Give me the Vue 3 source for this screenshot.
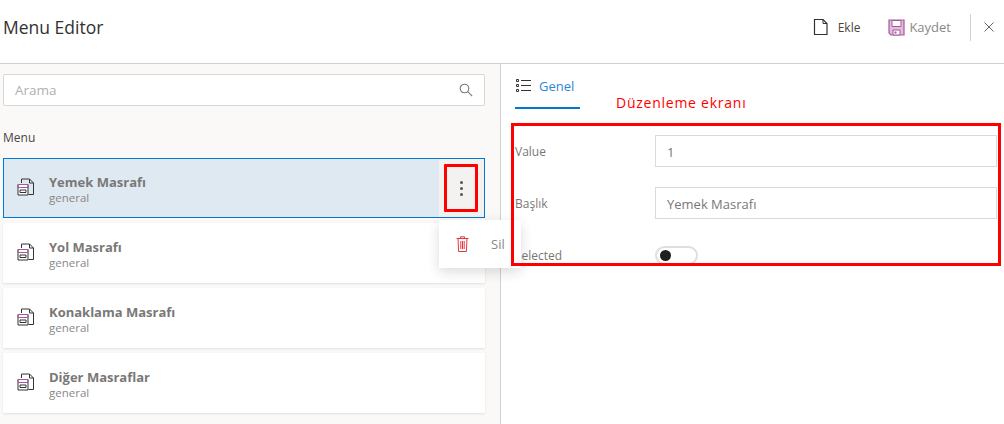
<script setup>
const items = [
  { title: 'Yemek Masrafı', active: true },
  { title: 'Yol Masrafı' },
  { title: 'Konaklama Masrafı' },
  { title: 'Diğer Masraflar' },
]
</script>

<template>
  <div class="page">
    <header class="top">
      <h1>Menu Editor</h1>
      <div class="actions">
        <button class="act ekle">
          <svg width="16" height="18" viewBox="0 0 16 18"><path d="M1.500 1.500h8.500l4 4v11h-12.500z" fill="#fff" stroke="#333" stroke-width="1.200"/><path d="M10 1.500v4h4" fill="none" stroke="#333"/></svg>
          <span>Ekle</span>
        </button>
        <button class="act kaydet">
          <svg width="17" height="17" viewBox="0 0 17 17"><path d="M1 1h15v15H3l-2-2z" fill="#e3bcdc" stroke="#a6589b" stroke-width="1.200"/><path d="M4 1.500h9v6H4z" fill="#fff" stroke="#a6589b"/><path d="M5 11h7v5H5z" fill="#fff" stroke="#a6589b"/><path d="M6.500 12.500h2v2h-2z" fill="#a6589b"/></svg>
          <span>Kaydet</span>
        </button>
        <i class="sep"></i>
        <svg class="close" width="10" height="10" viewBox="0 0 10 10"><path d="M.5.500l9 9M9.500.500l-9 9" stroke="#666" fill="none"/></svg>
      </div>
    </header>

    <main class="body">
      <aside class="left">
        <div class="search">
          <span>Arama</span>
          <svg width="14" height="14" viewBox="0 0 14 14"><circle cx="5.500" cy="5.500" r="4.300" fill="none" stroke="#777" stroke-width="1.100"/><path d="M8.700 8.700l4.500 4.500" stroke="#777" stroke-width="1.100"/></svg>
        </div>
        <div class="menu-label">Menu</div>
        <div class="list">
          <div v-for="it in items" :key="it.title" class="card" :class="{ active: it.active }">
            <svg class="doc" width="18" height="18" viewBox="0 0 18 18">
              <path d="M4.500 5V1h8l4 4v11.500h-5" fill="none" stroke="#333" stroke-width="1"/>
              <path d="M12.500 1v4h4" fill="none" stroke="#333" stroke-width="1"/>
              <path d="M1 6.500h10v10.500H1z" fill="#fff" stroke="#333" stroke-width="1"/>
              <path d="M1 6.500h10v3H1z" fill="none" stroke="#a6589b" stroke-width="1"/>
              <path d="M3 12h6v2.500H3z" fill="none" stroke="#333" stroke-width="1"/>
            </svg>
            <div class="txt">
              <b>{{ it.title }}</b>
              <small>general</small>
            </div>
            <div v-if="it.active" class="more">
              <i></i><i></i><i></i>
            </div>
          </div>
        </div>
      </aside>

      <section class="right">
        <div class="tabs">
          <div class="tab">
            <svg width="15" height="13" viewBox="0 0 15 13"><path d="M5 1.500h10M5 6.500h10M5 11.500h10" stroke="#333" fill="none"/><path d="M.5.500h2v2h-2zM.5 5.500h2v2h-2zM.5 10.500h2v2h-2z" fill="none" stroke="#333"/></svg>
            <span>Genel</span>
          </div>
        </div>
        <div class="form">
          <div class="row"><label>Value</label><div class="input">1</div></div>
          <div class="row"><label>Başlık</label><div class="input">Yemek Masrafı</div></div>
          <div class="row"><label>Selected</label><div class="toggle"><i></i></div></div>
        </div>
      </section>
    </main>

    <div class="popup">
      <svg width="13" height="16" viewBox="0 0 13 16"><path d="M.5 2.500h12M4.500 2.500V.800h4v1.700M2 2.500l.6 13h7.800l.6-13M4.800 5v8M6.500 5v8M8.200 5v8" fill="none" stroke="#e5393f" stroke-width="1"/></svg>
      <span>Sil</span>
    </div>
    <div class="mark-more"></div>
    <div class="mark-form"></div>
    <div class="note">Düzenleme ekranı</div>
  </div>
</template>

<style>
html, body { margin: 0; background: #fff; overflow: hidden; }
</style>

<style scoped>
.page {
  position: relative;
  width: 1004px;
  height: 424px;
  overflow: hidden;
  font-family: "Open Sans", "Noto Sans", sans-serif;
  color: #605e5c;
  background: #fff;
}
.top {
  box-sizing: content-box;
  height: 54px;
  padding: 0 10px 9px 3px;
  border-bottom: 1px solid #d2d0ce;
  display: flex;
  align-items: center;
  justify-content: space-between;
}
h1 { margin: 0; font-size: 17.500px; font-weight: 500; color: #323130; }
.actions { display: flex; align-items: center; }
.act {
  display: flex; align-items: center; border: 0; background: none; padding: 0;
  font: inherit; font-size: 12px; color: #484644;
}
.ekle { margin-right: 28px; gap: 9px; }
.kaydet { font-size: 13px; color: #8a8886; gap: 4px; }
.sep { width: 1px; height: 27px; background: #d2d0ce; margin: 0 13px 0 19px; }
.body { display: flex; height: 360px; }
.left {
  width: 501px;
  flex: none;
  box-sizing: border-box;
  background: #faf9f8;
  border-right: 1px solid #d2d0ce;
  padding: 10px 15px 0 3px;
}
.search {
  height: 32px; box-sizing: border-box; background: #fff; border: 1px solid #d9d7d5; border-radius: 2px;
  display: flex; align-items: center; justify-content: space-between; padding: 0 11px 0 11px;
  font-size: 13.500px; color: #b3b0ad;
}
.menu-label { margin-top: 24px; height: 28px; font-size: 12px; color: #484644; line-height: 16px; }
.list { display: flex; flex-direction: column; gap: 5px; }
.card {
  height: 60px; box-sizing: border-box; background: #fff; display: flex; align-items: center; padding: 0 0 0 14px;
  box-shadow: 0 1px 2px rgba(0,0,0,.1);
  position: relative;
}
.card.active { background: #dfe9f2; border: 1px solid #0078d4; padding-left: 13px; box-shadow: none; }
.doc { margin-top: -2px; flex: none; }
.txt { margin-left: 14px; display: flex; flex-direction: column; margin-top: 1px; }
.txt b { font-size: 13px; font-weight: 700; color: #7a7876; line-height: 18px; }
.txt small { font-size: 11.500px; color: #8a8886; line-height: 14px; }
.more {
  margin-left: auto; width: 45px; height: 58px; background: #f3f2f1; display: flex; flex-direction: column;
  align-items: center; justify-content: center; gap: 3px;
}
.more i { width: 3px; height: 3px; border-radius: 50%; background: #555; }
.right { flex: 1; padding: 0 7px 0 14px; }
.tabs { height: 60px; }
.tab {
  width: 65px; height: 45px; box-sizing: border-box; border-bottom: 2px solid #0078d4;
  display: flex; align-items: center; gap: 8px; padding: 0 0 0 1px; font-size: 13px; color: #2b88d8;
}
.form { padding-top: 11px; }
.row { display: flex; height: 52px; }
label { width: 140px; flex: none; font-size: 12px; color: #7a7876; line-height: 33px; }
.input {
  flex: 1; height: 32px; box-sizing: border-box; border: 1px solid #dcdad8; padding: 0 11px;
  font-size: 13px; line-height: 32px; color: #7a7876;
}
.toggle {
  margin-top: 7px; width: 43px; height: 19px; box-sizing: border-box; border: 2px solid #e1dfdd; border-radius: 10px;
  position: relative;
}
.toggle i { position: absolute; left: 3px; top: 2px; width: 11px; height: 11px; border-radius: 50%; background: #201f1e; }
.popup {
  position: absolute; left: 439px; top: 220px; width: 82px; height: 48px; background: #fff;
  box-shadow: 0 4px 12px rgba(0,0,0,.14); display: flex; align-items: center; padding-left: 17px; box-sizing: border-box;
  font-size: 13px; color: #8a8886; gap: 22px;
}
.mark-more {
  position: absolute; left: 444px; top: 164px; width: 34px; height: 48px; box-sizing: border-box; border: 3px solid #f00; border-radius: 1px;
}
.mark-form {
  position: absolute; left: 511px; top: 123px; width: 490px; height: 143px; box-sizing: border-box; border: 3px solid #f00;
}
.note { position: absolute; left: 616px; top: 94px; font-size: 14px; letter-spacing: .75px; line-height: 18px; color: #f00; }
</style>
